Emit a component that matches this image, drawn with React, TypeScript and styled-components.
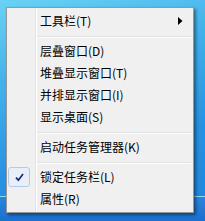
import * as React from 'react';
import styled, { createGlobalStyle } from 'styled-components';

const Global = createGlobalStyle`
    html, body {
        margin: 0;
        padding: 0;
    }
    body {
        font-family: "Noto Sans CJK SC", "Noto Sans", sans-serif;
    }
`

type Entry =
    | { kind: 'item'; label: string; submenu?: boolean; checked?: boolean }
    | { kind: 'sep' };

const entries: Entry[] = [
    { kind: 'item', label: '工具栏(T)', submenu: true },
    { kind: 'sep' },
    { kind: 'item', label: '层叠窗口(D)' },
    { kind: 'item', label: '堆叠显示窗口(T)' },
    { kind: 'item', label: '并排显示窗口(I)' },
    { kind: 'item', label: '显示桌面(S)' },
    { kind: 'sep' },
    { kind: 'item', label: '启动任务管理器(K)' },
    { kind: 'sep' },
    { kind: 'item', label: '锁定任务栏(L)', checked: true },
    { kind: 'item', label: '属性(R)' },
];

const App = () => {
    return (
        <>
            <Global />
            <Desktop>
                <Menu>
                    {entries.map((e, i) =>
                        e.kind === 'sep' ? (
                            <Separator key={i} />
                        ) : (
                            <Item key={i}>
                                <CheckSlot $checked={!!e.checked}>
                                    {e.checked && (
                                        <svg width="9" height="9" viewBox="0 0 9 9">
                                            <path d="M1 4.6 L3.4 7.2 L8 1" fill="none" stroke="#102a80" strokeWidth="1.7" />
                                        </svg>
                                    )}
                                </CheckSlot>
                                <Label>{e.label}</Label>
                                {e.submenu && (
                                    <Arrow width="5" height="8" viewBox="0 0 5 8">
                                        <path d="M0 0 L4.5 4 L0 8 Z" fill="#000" />
                                    </Arrow>
                                )}
                            </Item>
                        )
                    )}
                </Menu>
            </Desktop>
        </>
    );
};

// wallpaper on top, taskbar strip from y=196 down
const Desktop = styled.div`
    width: 205px;
    height: 221px;
    overflow: hidden;
    padding: 7px 0 0 6px;
    box-sizing: border-box;
    background:
        linear-gradient(to bottom, transparent 196px, #8fd8f6 196px, #8fd8f6 197px, #2a86dc 197px, #1b6fcf 221px),
        linear-gradient(165deg, #6ad2f3 0%, #43b2ec 30%, #2792e2 65%, #1f84dc 100%);
`

const Menu = styled.div`
    width: 188px;
    box-sizing: border-box;
    padding: 2px 3px 2px 1px;
    border: 1px solid #979797;
    background-color: #f0f0f0;
    background-image: linear-gradient(
        to right,
        transparent 28px,
        #e2e3e3 28px,
        #e2e3e3 29px,
        #ffffff 29px,
        #ffffff 30px,
        transparent 30px
    );
    box-shadow: 2px 2px 3px rgba(0, 0, 0, 0.45);
    display: flex;
    flex-direction: column;
`

const Item = styled.div`
    height: 22px;
    display: flex;
    align-items: center;
    color: #000;
    font-size: 12px;
    cursor: default;
`

const CheckSlot = styled.div<{ $checked: boolean }>`
    width: 22px;
    height: 20px;
    box-sizing: border-box;
    margin-right: 10px;
    display: flex;
    align-items: center;
    justify-content: center;
    border-radius: 3px;
    border: 1px solid ${p => (p.$checked ? '#b4cbe8' : 'transparent')};
    background: ${p => (p.$checked ? '#e9eff8' : 'transparent')};
`

const Label = styled.span`
    line-height: 22px;
    white-space: nowrap;
`

const Arrow = styled.svg`
    margin-left: auto;
    margin-right: 7px;
`

const Separator = styled.div`
    height: 8px;
    margin-left: 29px;
    margin-right: -1px;
    box-sizing: border-box;
    padding-top: 4px;
    &::before {
        content: '';
        display: block;
        height: 1px;
        background: #e0e0e0;
        border-bottom: 1px solid #ffffff;
    }
`

export default App;
